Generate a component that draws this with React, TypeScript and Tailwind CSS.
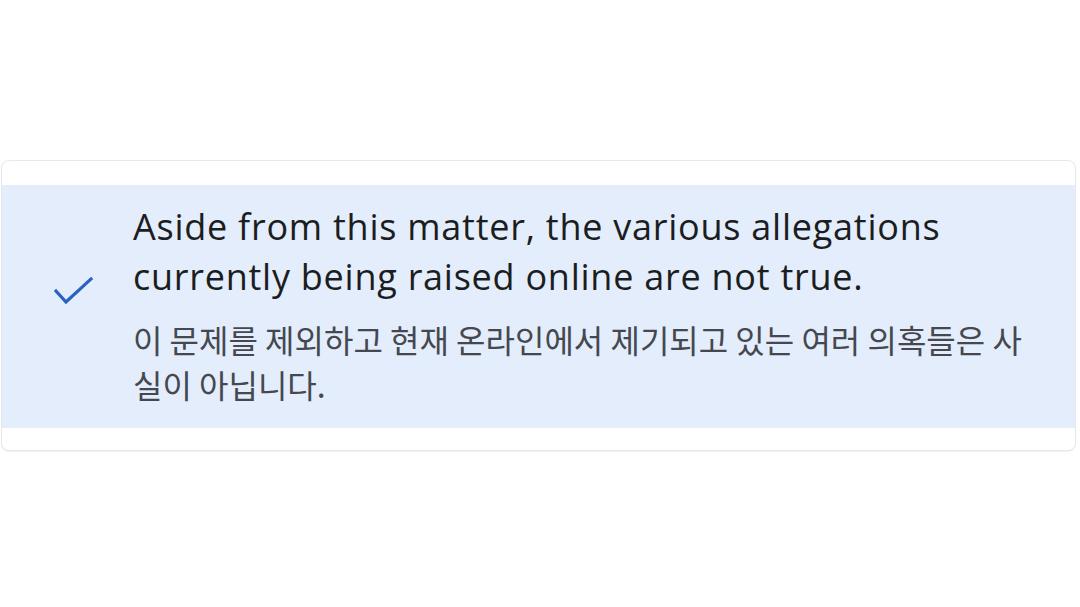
import React from "react";

const CheckIcon: React.FC = () => (
  <svg width="42" height="32" viewBox="0 0 42 32" fill="none" aria-hidden="true">
    <path d="M2 15 L12 26 L37 3" stroke="#2a62c2" strokeWidth="3.2" strokeLinecap="square" strokeLinejoin="miter" />
  </svg>
);

const App: React.FC = () => {
  return (
    <div className="w-[1080px] h-[607px] bg-white overflow-hidden">
      <div className="pt-[160px]">
        <div className="ml-px w-[1075px] h-[291px] bg-white border border-[#e6e8ec] rounded-lg pt-6 pb-[22px] shadow-[0_1px_1px_rgba(0,0,0,0.06)]">
          <div className="flex bg-[#e3edfc] h-full">
            <div className="w-[131px] shrink-0 pl-[52px] pt-[91px]">
              <CheckIcon />
            </div>
            <div className="pt-[17px] w-[900px]">
              <p className="w-[880px] font-['Open_Sans',sans-serif] text-[36px] leading-[50px] text-[#1c1d20] tracking-[0.75px]">
                Aside from this matter, the various allegations currently being raised online are not true.
              </p>
              <p className="mt-[15px] w-[900px] font-['Noto_Sans_CJK_KR',sans-serif] text-[32px] leading-[45px] text-[#45484e]">
                이 문제를 제외하고 현재 온라인에서 제기되고 있는 여러 의혹들은 사실이 아닙니다.
              </p>
            </div>
          </div>
        </div>
      </div>
    </div>
  );
};

export default App;
